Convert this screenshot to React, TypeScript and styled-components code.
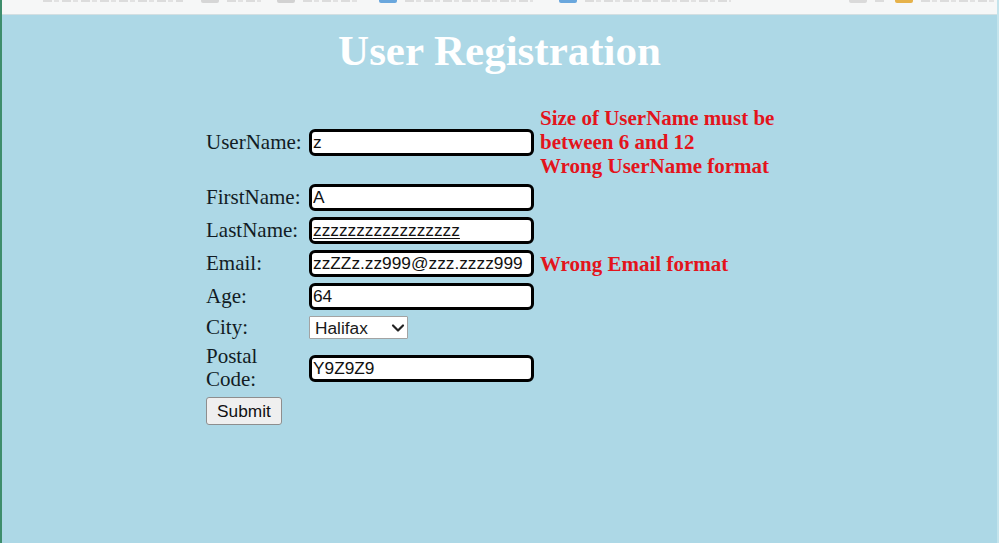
import React from 'react';
import styled, { createGlobalStyle } from 'styled-components';
import { ChevronDown } from 'lucide-react';

const GlobalStyle = createGlobalStyle`
  html, body {
    margin: 0;
    padding: 0;
    background: #add8e6;
  }
  body {
    font-family: 'Liberation Serif', 'Times New Roman', serif;
  }
`;

// bottoms of the browser bookmark bar, cut off at the top of the shot
const bookmarks = [
  { icon: 'transparent', width: 140, gap: 18 },
  { icon: '#d6d6d6', width: 34, gap: 16 },
  { icon: '#d2d2d2', width: 54, gap: 22 },
  { icon: '#6aa7dd', width: 128, gap: 26 },
  { icon: '#6aa7dd', width: 146, gap: 118 },
  { icon: '#dadada', width: 10, gap: 10 },
  { icon: '#e6b24a', width: 112, gap: 0 },
];

export default function App() {
  return (
    <Page>
      <GlobalStyle />
      <BookmarkBar aria-hidden='true'>
        {bookmarks.map((b, i) => (
          <Bookmark key={i} $gap={b.gap}>
            <BookmarkIcon $color={b.icon} />
            <BookmarkStub style={{ width: b.width }} />
          </Bookmark>
        ))}
      </BookmarkBar>

      <Title>User Registration</Title>

      <Form onSubmit={(e) => e.preventDefault()}>
        <Label>UserName:</Label>
        <Field type='text' defaultValue='z' />
        <Errors>
          Size of UserName must be
          <br />
          between 6 and 12
          <br />
          Wrong UserName format
        </Errors>

        <Label>FirstName:</Label>
        <Field type='text' defaultValue='A' />
        <span />

        <Label>LastName:</Label>
        <Field type='text' defaultValue='zzzzzzzzzzzzzzzzz' $flagged />
        <span />

        <Label>Email:</Label>
        <Field type='text' defaultValue='zzZZz.zz999@zzz.zzzz999' />
        <Errors>Wrong Email format</Errors>

        <Label>Age:</Label>
        <Field type='text' defaultValue='64' />
        <span />

        <Label>City:</Label>
        <SelectWrap>
          <CitySelect defaultValue='Halifax'>
            <option>Halifax</option>
            <option>Toronto</option>
            <option>Montreal</option>
            <option>Vancouver</option>
          </CitySelect>
          <Chevron size={20} strokeWidth={2.6} />
        </SelectWrap>
        <span />

        <Label>Postal Code:</Label>
        <Field type='text' defaultValue='Y9Z9Z9' />
        <span />

        <SubmitButton type='submit'>Submit</SubmitButton>
      </Form>
    </Page>
  );
}

const Page = styled.div`
  min-height: 100vh;
  border-left: 2px solid #3e8e6c;
  border-right: 2px solid #c4e4ec;
  box-sizing: border-box;
  background: #add8e6;
`;

const BookmarkBar = styled.div`
  display: flex;
  align-items: flex-start;
  height: 14px;
  padding-left: 15px;
  overflow: hidden;
  background: #f6f7f7;
  border-bottom: 1px solid #d3dfe2;
`;

const Bookmark = styled.div<{ $gap: number }>`
  display: flex;
  align-items: flex-start;
  gap: 8px;
  margin-right: ${(p) => p.$gap}px;
`;

const BookmarkIcon = styled.span<{ $color: string }>`
  width: 18px;
  height: 3px;
  border-radius: 0 0 2px 2px;
  background: ${(p) => p.$color};
`;

const BookmarkStub = styled.span`
  height: 2px;
  background: repeating-linear-gradient(
    90deg,
    #dcdcdc 0 9px,
    transparent 9px 11px,
    #e2e2e2 11px 16px,
    transparent 16px 19px
  );
`;

const Title = styled.h1`
  margin: 11px 0 31px;
  text-align: center;
  color: #ffffff;
  font-size: 43px;
  line-height: 49px;
  font-weight: bold;
`;

const Form = styled.form`
  display: grid;
  grid-template-columns: 99px 227px auto;
  column-gap: 4px;
  row-gap: 6px;
  align-items: center;
  padding-left: 204px;
`;

const Label = styled.label`
  font-size: 21px;
  line-height: 23px;
  color: #121c24;
`;

const Field = styled.input<{ $flagged?: boolean }>`
  box-sizing: border-box;
  width: 225px;
  height: 27px;
  margin: 0;
  padding: 0 1px;
  border: 3px solid #000;
  border-radius: 6px;
  background: #fff;
  font-family: 'Liberation Sans', Arial, sans-serif;
  font-size: 17.3px;
  color: #111;
  outline: none;
  text-decoration: ${(p) => (p.$flagged ? 'underline' : 'none')};
  text-decoration-thickness: 1px;
  text-underline-offset: 2px;
`;

const Errors = styled.div`
  font-size: 21px;
  line-height: 24px;
  font-weight: bold;
  color: #e3141c;
`;

const SelectWrap = styled.div`
  position: relative;
  width: 99px;
  height: 23px;
`;

const CitySelect = styled.select`
  appearance: none;
  box-sizing: border-box;
  width: 100%;
  height: 100%;
  margin: 0;
  padding: 0 0 0 5px;
  border: 1px solid #a3a3a3;
  border-radius: 1px;
  background: #fff;
  font-family: 'Liberation Sans', Arial, sans-serif;
  font-size: 17.3px;
  color: #1a1a1a;
  outline: none;
`;

const Chevron = styled(ChevronDown)`
  position: absolute;
  right: 0;
  top: 50%;
  transform: translateY(-50%);
  color: #222;
  pointer-events: none;
`;

const SubmitButton = styled.button`
  justify-self: start;
  box-sizing: border-box;
  width: 76px;
  height: 28px;
  margin: 0;
  padding: 0;
  border: 1px solid #8e8e8e;
  border-radius: 3px;
  background: #efefef;
  font-family: 'Liberation Sans', Arial, sans-serif;
  font-size: 17.3px;
  color: #111;
`;
